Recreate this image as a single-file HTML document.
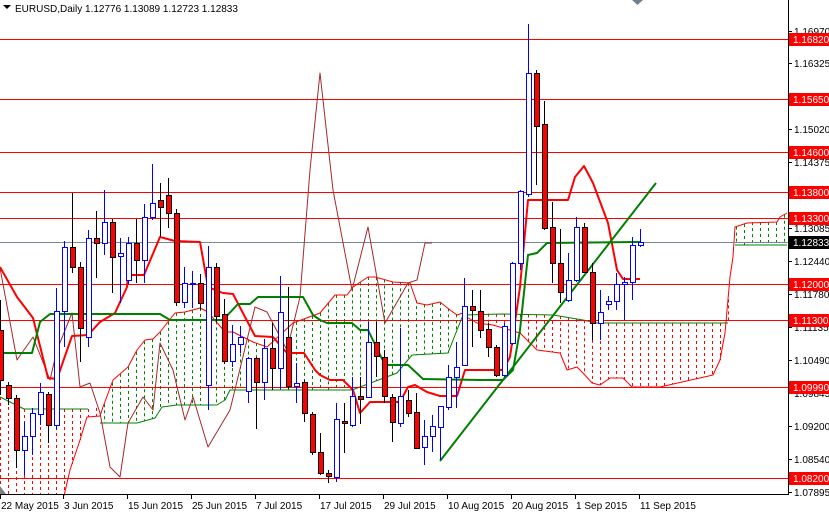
<!DOCTYPE html>
<html><head><meta charset="utf-8">
<style>
html,body{margin:0;padding:0;background:#fff;}
body{width:829px;height:513px;overflow:hidden;position:relative;font-family:"Liberation Sans",sans-serif;}
svg{position:absolute;left:0;top:0;}
</style></head>
<body>
<svg id="c" width="829" height="513" viewBox="0 0 829 513" xmlns="http://www.w3.org/2000/svg" font-family="Liberation Sans, sans-serif" font-size="10">
<g id="cloud"></g>
<g id="hl"></g>
<g id="lines"></g>
<g id="candles"></g>
<g id="axis"></g>
</svg>
<script>
var NS="http://www.w3.org/2000/svg";
function el(p,t,a,txt){var e=document.createElementNS(NS,t);for(var k in a)e.setAttribute(k,a[k]);if(txt!=null)e.textContent=txt;document.getElementById(p).appendChild(e);return e;}
function pl(p,pts,col,w,extra){var a={points:pts.map(function(q){return q.join(",")}).join(" "),fill:"none",stroke:col,"stroke-width":w,"stroke-linejoin":"round"};for(var k in extra)a[k]=extra[k];el(p,"polyline",a);}
function interp(arr,x){if(x<=arr[0][0])return arr[0][1];for(var i=1;i<arr.length;i++){if(x<=arr[i][0]){var a=arr[i-1],b=arr[i];return a[1]+(b[1]-a[1])*(x-a[0])/(b[0]-a[0]);}}return arr[arr.length-1][1];}
var upper=[[0,397],[24,409],[64,409],[88,409],[103,407],[113,380],[128,367],[137,350],[145,340],[153,339],[160,332],[175,313],[185,312],[200,308],[208,312],[225,332],[233,332],[253,342],[267,347],[293,323],[320,313],[335,295],[347,295],[353,287],[368,277],[375,277],[393,282],[410,283],[417,303],[427,305],[440,302],[450,310],[457,315],[463,313],[502,314],[553,315],[583,320],[597,323],[728,323],[735,227],[747,223],[753,222],[777,222],[780,217],[787,213]];
var lower=[[0,500],[64,500],[70,470],[80,440],[87,417],[100,416],[103,423],[137,423],[155,418],[162,407],[177,405],[217,405],[225,400],[230,390],[352,390],[397,373],[412,355],[448,353],[457,330],[463,315],[477,323],[493,325],[520,333],[537,350],[560,353],[567,370],[577,367],[583,373],[592,383],[600,385],[610,378],[623,378],[632,387],[660,387],[713,375],[720,360],[725,333],[730,277],[733,257],[735,245],[787,245]];
for(var x=0;x<=786;x+=8){var u=interp(upper,x),l=interp(lower,x);var g=(x>=100&&x<=463)||(x>=729);
el("cloud","line",{x1:x+0.5,y1:Math.min(u,l),x2:x+0.5,y2:Math.min(Math.max(u,l),494),stroke:g?"#008000":"#ff0000","stroke-width":1,"stroke-dasharray":"3,3"});}
pl("cloud",[[0,397],[24,409],[88,409]],"#008000",1);
pl("cloud",[[64,496],[70,470],[80,440],[87,417],[100,416],[103,407],[113,380],[128,367],[137,350],[145,340],[153,339],[160,332],[175,313],[185,312],[200,308],[208,312],[225,332],[233,332],[253,342],[267,347],[293,323],[320,313],[335,295],[347,295],[353,287],[368,277],[375,277],[393,282],[410,283],[417,303],[427,305],[440,302],[450,310],[457,315],[463,313]],"#ff0000",1);
pl("cloud",[[100,423],[137,423],[155,418],[162,407],[177,405],[217,405],[225,400],[230,390],[352,390],[397,373],[412,355],[448,353],[457,330],[463,315],[502,314],[553,315],[583,320],[597,323],[728,323]],"#008000",1);
pl("cloud",[[463,315],[477,323],[493,325],[520,333],[537,350],[560,353],[567,370],[577,367],[583,373],[592,383],[600,385],[610,378],[623,378],[632,387],[660,387],[713,375],[720,360],[725,333],[730,277],[733,257],[735,227],[747,223],[777,222],[780,217],[787,213]],"#ff0000",1);
pl("cloud",[[735,245],[787,245]],"#008000",1);
[39,99,152,192,218,284,320,387,478].forEach(function(y){el("hl","line",{x1:0,y1:y+0.5,x2:788,y2:y+0.5,stroke:"#ff0000","stroke-width":1});});
el("hl","line",{x1:0,y1:242.5,x2:788,y2:242.5,stroke:"#778899","stroke-width":1});
pl("lines",[[0,268],[17,360],[33,337],[50,380],[57,350],[72,313],[80,387],[90,383],[100,413],[110,467],[120,477],[128,423],[143,397],[153,410],[160,343],[173,370],[185,420],[193,397],[208,447],[230,410],[255,307],[267,312],[287,350],[300,297],[310,170],[320,73],[333,190],[352,290],[368,227],[385,323],[408,283],[417,280],[425,243],[432,243]],"#a52a2a",1);
pl("lines",[[0,267],[17,297],[33,318],[48,378],[57,379],[72,336],[88,335],[100,322],[115,313],[127,287],[128,275],[144,275],[160,237],[175,241],[200,242],[208,287],[223,293],[233,294],[255,336],[273,337],[287,353],[304,353],[315,370],[320,375],[330,380],[343,380],[353,390],[360,413],[370,402],[400,402],[408,387],[415,385],[427,392],[440,396],[457,396],[465,370],[503,370],[510,357],[520,287],[528,200],[568,200],[575,177],[584,166],[593,183],[602,207],[608,223],[617,270],[623,279],[640,279]],"#ff0000",2);
pl("lines",[[0,353],[32,353],[40,322],[50,314],[160,314],[170,320],[223,320],[238,304],[250,304],[258,297],[303,297],[313,315],[320,320],[327,323],[352,323],[360,330],[368,330],[385,365],[408,365],[423,379],[480,380],[503,380],[513,370],[520,330],[528,255],[537,253],[547,243],[640,242]],"#008000",2);
el("lines","line",{x1:440,y1:461,x2:656,y2:183,stroke:"#008000","stroke-width":2});
var C=[[0,330,380,300,395,0],[8,385,398,382,405,0],[16,398,450,395,468,0],[24,436,450,422,475,1],[32,413,436,408,455,1],[40,392,414,383,425,1],[48,394,425,392,443,0],[56,311,425,288,430,1],[64,247,311,241,347,1],[72,247,267,193,273,0],[80,267,328,262,362,0],[88,238,337,230,347,1],[96,238,243,211,278,0],[104,222,243,190,255,1],[112,222,257,219,293,0],[120,253,256,238,303,1],[128,243,280,237,284,1],[136,243,260,219,283,0],[144,217,260,204,283,1],[152,203,217,164,220,1],[160,200,207,183,237,0],[168,195,213,178,228,0],[176,213,302,209,306,0],[184,283,302,267,308,1],[192,283,284,271,308,1],[200,283,303,274,310,0],[208,267,385,246,410,1],[216,267,316,263,322,0],[224,314,361,299,364,0],[232,344,361,325,367,1],[240,337,344,326,353,1],[248,358,391,357,403,1],[256,358,382,357,429,0],[264,348,382,339,400,1],[272,348,368,323,390,0],[280,312,368,276,389,1],[288,337,386,287,389,0],[296,383,386,363,403,1],[304,382,413,380,422,0],[312,414,452,412,455,0],[320,452,473,433,475,0],[328,473,476,470,483,0],[336,419,477,403,482,1],[344,421,423,403,453,0],[352,396,425,377,427,1],[360,396,399,377,424,0],[368,342,397,322,397,1],[376,342,356,322,377,0],[384,357,396,350,403,0],[392,397,422,394,442,0],[400,396,423,328,427,1],[408,400,413,390,417,0],[416,412,448,393,449,0],[424,436,447,420,465,1],[432,426,436,415,452,1],[440,406,427,406,460,1],[448,377,407,365,410,1],[456,367,377,342,408,1],[464,306,365,278,365,1],[472,306,310,290,347,0],[480,311,330,290,338,0],[488,329,347,323,357,0],[496,347,375,345,377,0],[504,326,375,323,377,1],[512,263,343,262,345,1],[520,191,263,190,270,1],[528,73,194,24,197,1],[536,73,126,70,185,0],[544,124,228,101,230,0],[552,227,263,202,283,0],[560,263,292,229,303,0],[568,280,300,253,302,1],[576,227,280,217,282,1],[584,227,272,223,273,0],[592,272,323,263,340,0],[600,312,323,290,340,1],[608,301,304,296,310,1],[616,284,301,273,310,1],[624,282,284,277,320,1],[632,245,282,237,300,1],[640,242,245,229,247,1]];
C.forEach(function(c){var x=c[0],bull=c[5];var col=bull?"#0000ff":"#000000";
el("candles","line",{x1:x+0.5,y1:c[3],x2:x+0.5,y2:c[4],stroke:col,"stroke-width":1});
el("candles","rect",{x:x-2+0.5,y:c[1]+0.5,width:5,height:Math.max(1,c[2]-c[1]),fill:bull?"#ffffff":"#ff0000",stroke:col,"stroke-width":1});});
el("axis","line",{x1:788.5,y1:0,x2:788.5,y2:495,stroke:"#000","stroke-width":1});
el("axis","line",{x1:0,y1:494.5,x2:789,y2:494.5,stroke:"#000","stroke-width":1});
[[31,"1.16970"],[63,"1.16325"],[129,"1.15020"],[162,"1.14375"],[195,"1.13730"],[228,"1.13085"],[261,"1.12440"],[294,"1.11780"],[327,"1.11135"],[360,"1.10490"],[393,"1.09845"],[426,"1.09200"],[459,"1.08540"],[492,"1.07895"]].forEach(function(t){
el("axis","line",{x1:788,y1:t[0]+0.5,x2:792,y2:t[0]+0.5,stroke:"#000"});
el("axis","text",{x:794,y:t[0]+4,fill:"#000"},t[1]);});
[[39,"1.16820"],[99,"1.15650"],[152,"1.14600"],[192,"1.13800"],[218,"1.13300"],[284,"1.12000"],[320,"1.11300"],[387,"1.09990"],[478,"1.08200"]].forEach(function(t){
el("axis","rect",{x:789,y:t[0]-6,width:40,height:13,fill:"#ff0000"});
el("axis","text",{x:793,y:t[0]+4,fill:"#fff"},t[1]);});
el("axis","rect",{x:789,y:236,width:40,height:13,fill:"#000"});
el("axis","text",{x:793,y:246,fill:"#fff"},"1.12833");
[[0,"22 May 2015"],[63,"3 Jun 2015"],[127,"15 Jun 2015"],[191,"25 Jun 2015"],[255,"7 Jul 2015"],[319,"17 Jul 2015"],[383,"29 Jul 2015"],[447,"10 Aug 2015"],[511,"20 Aug 2015"],[575,"1 Sep 2015"],[639,"11 Sep 2015"]].forEach(function(t){
el("axis","line",{x1:t[0]+0.5,y1:494,x2:t[0]+0.5,y2:499,stroke:"#000"});
el("axis","text",{x:t[0]+1,y:509,fill:"#000"},t[1]);});
el("axis","text",{x:15,y:12,fill:"#000"},"EURUSD,Daily  1.12776 1.13089 1.12723 1.12833").setAttribute("xml:space","preserve");
el("axis","polygon",{points:"3,5 11,5 7,9",fill:"#000"});
el("axis","polygon",{points:"632,0 643,0 637.5,5",fill:"#708090"});
el("axis","polygon",{points:"0,486 0,494 6,494",fill:"#808080"});
</script>
</body></html>
